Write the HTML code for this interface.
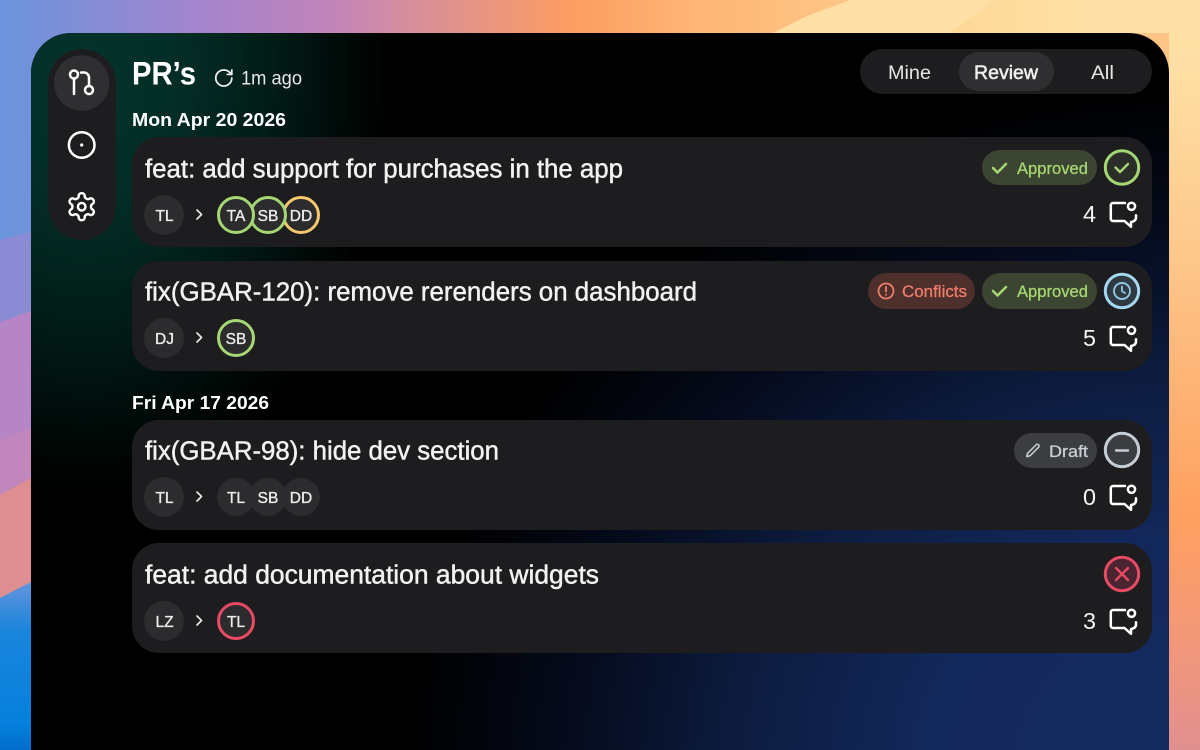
<!DOCTYPE html>
<html><head><meta charset="utf-8"><title>PR's</title>
<style>
html,body{margin:0;padding:0;background:#000;width:1200px;height:750px;overflow:hidden}
svg{display:block}
text{font-family:"Liberation Sans",sans-serif}
.t{font-size:25.5px;fill:#f2f2f2;stroke:#f2f2f2;stroke-width:.45}
.a{font-size:15.5px;fill:#ececec;text-anchor:middle;stroke:#ececec;stroke-width:.35}
.n{font-size:23px;fill:#f4f4f4}
.ic{fill:none;stroke:#fff;stroke-width:2.5;stroke-linecap:round;stroke-linejoin:round}
</style></head><body>
<svg width="1200" height="750" viewBox="0 0 1200 750" xmlns="http://www.w3.org/2000/svg">
<defs>
<linearGradient id="top" x1="0" y1="0" x2="1200" y2="0" gradientUnits="userSpaceOnUse">
<stop offset="0" stop-color="#6a95dc"/><stop offset=".026" stop-color="#7291da"/><stop offset=".17" stop-color="#a584cc"/><stop offset=".27" stop-color="#c084bb"/><stop offset=".36" stop-color="#dc9095"/><stop offset=".47" stop-color="#fb9c62"/><stop offset=".58" stop-color="#ffb575"/><stop offset=".7" stop-color="#fdc585"/><stop offset="1" stop-color="#fdc585"/>
</linearGradient>
<linearGradient id="streak" x1="950" y1="0" x2="1100" y2="0" gradientUnits="userSpaceOnUse">
<stop offset="0" stop-color="#fdd897"/><stop offset="1" stop-color="#fee0a6"/>
</linearGradient>
<linearGradient id="right" x1="0" y1="0" x2="0" y2="750" gradientUnits="userSpaceOnUse">
<stop offset="0" stop-color="#fee0a6"/><stop offset=".1" stop-color="#fedea3"/><stop offset=".33" stop-color="#fdc88c"/><stop offset=".69" stop-color="#ffa060"/><stop offset=".9" stop-color="#ee9580"/><stop offset="1" stop-color="#e09090"/>
</linearGradient>
<linearGradient id="leftb" x1="0" y1="580" x2="0" y2="750" gradientUnits="userSpaceOnUse">
<stop offset="0" stop-color="#6795dd"/><stop offset=".3" stop-color="#1a85dc"/><stop offset=".85" stop-color="#0580dc"/><stop offset="1" stop-color="#006ccc"/>
</linearGradient>
<linearGradient id="leftt" x1="0" y1="0" x2="31" y2="0" gradientUnits="userSpaceOnUse">
<stop offset="0" stop-color="#6a95dc"/><stop offset="1" stop-color="#7291da"/>
</linearGradient>
<radialGradient id="green" gradientUnits="userSpaceOnUse" cx="0" cy="0" r="1" gradientTransform="translate(85 70) scale(310 430)">
<stop offset="0" stop-color="#04342c"/><stop offset=".3" stop-color="#032d26"/><stop offset=".6" stop-color="#021c17"/><stop offset=".85" stop-color="#000907"/><stop offset="1" stop-color="#000"/>
</radialGradient>
<radialGradient id="blue" gradientUnits="userSpaceOnUse" cx="0" cy="0" r="1" gradientTransform="translate(1190 770) scale(780 680)">
<stop offset="0" stop-color="#152a60"/><stop offset=".35" stop-color="#13285a"/><stop offset=".6" stop-color="#0c1a3c"/><stop offset=".8" stop-color="#050b1c"/><stop offset="1" stop-color="#000"/>
</radialGradient>
<g id="cm" class="ic"><path d="M1125 203H1113a2.200 2.200 0 0 0-2.200 2.200V218.800a2.200 2.200 0 0 0 2.200 2.200H1124.500L1131 226.800V222C1134 221.500 1136 220 1136 217.500V215.200"/><circle cx="1131.500" cy="206.300" r="3.600"/></g>
<g id="ck"><path d="M0 0l4.500 4.500L13-4" fill="none" stroke="#a6d672" stroke-width="2.600" stroke-linecap="round" stroke-linejoin="round"/></g>
</defs>

<rect width="1200" height="750" fill="url(#top)"/>
<rect x="1169" y="0" width="31" height="750" fill="url(#right)"/>
<polygon points="850,0 1169,0 1169,33 773,33 807,16" fill="#fedfa5"/>
<polygon points="995,0 1100,0 1080,33 949,33" fill="url(#streak)"/>
<rect x="0" y="0" width="31" height="340" fill="url(#leftt)"/>
<polygon points="0,240 31,232 31,311 0,322" fill="#8b8ad4"/>
<polygon points="0,322 31,311 31,500 0,500" fill="#b585c6"/>
<polygon points="0,440 31,428 31,480 0,495" fill="#c186bb"/>
<polygon points="0,495 31,478 31,582 0,598" fill="#df8f92"/>
<polygon points="0,598 31,582 31,750 0,750" fill="url(#leftb)"/>

<path d="M31 750V73a40 40 0 0 1 40-40H1129a40 40 0 0 1 40 40V750Z" fill="#000"/>
<path d="M31 750V73a40 40 0 0 1 40-40H420V520H31Z" fill="url(#green)" />
<path d="M400 750V100H1169V750Z" fill="url(#blue)"/>

<rect x="48" y="49" width="68" height="191" rx="34" fill="#1d1d1f"/>
<circle cx="81.700" cy="83" r="27.700" fill="#2f2f31"/>
<g class="ic">
<circle cx="74" cy="74.500" r="4"/><path d="M74 78.500V94"/><path d="M81 72.500H84a5 5 0 0 1 5 5V86"/><circle cx="89" cy="90" r="4"/>
<circle cx="81.700" cy="145" r="12.800"/>
</g>
<circle cx="81.700" cy="145" r="1.600" fill="#fff"/>
<g transform="translate(65.500 190.500) scale(1.350)" class="ic" style="stroke-width:1.800">
<path d="M12.220 2h-.44a2 2 0 0 0-2 2v.18a2 2 0 0 1-1 1.730l-.43.25a2 2 0 0 1-2 0l-.15-.08a2 2 0 0 0-2.730.73l-.22.38a2 2 0 0 0 .73 2.730l.15.1a2 2 0 0 1 1 1.720v.51a2 2 0 0 1-1 1.740l-.15.09a2 2 0 0 0-.73 2.730l.22.38a2 2 0 0 0 2.730.73l.15-.08a2 2 0 0 1 2 0l.43.25a2 2 0 0 1 1 1.730V20a2 2 0 0 0 2 2h.44a2 2 0 0 0 2-2v-.18a2 2 0 0 1 1-1.730l.43-.25a2 2 0 0 1 2 0l.15.08a2 2 0 0 0 2.730-.73l.22-.39a2 2 0 0 0-.73-2.730l-.15-.08a2 2 0 0 1-1-1.740v-.5a2 2 0 0 1 1-1.740l.15-.09a2 2 0 0 0 .73-2.730l-.22-.38a2 2 0 0 0-2.730-.73l-.15.08a2 2 0 0 1-2 0l-.43-.25a2 2 0 0 1-1-1.730V4a2 2 0 0 0-2-2z"/><circle cx="12" cy="12" r="2.800"/>
</g>

<text x="132" y="84.500" font-size="32" font-weight="700" fill="#fff" textLength="64" lengthAdjust="spacingAndGlyphs">PR’s</text>
<g transform="translate(213.100 67.300) scale(.89)" fill="none" stroke="#eee" stroke-width="2" stroke-linecap="round" stroke-linejoin="round"><path d="M21 12a9 9 0 1 1-9-9c2.520 0 4.930 1 6.740 2.740L21 8"/><path d="M21 3v5h-5"/></g>
<text x="241" y="84.500" font-size="19.500" fill="#e8e8e8" textLength="61" lengthAdjust="spacingAndGlyphs">1m ago</text>

<rect x="860" y="49" width="292" height="45" rx="22.500" fill="#1d1d1f"/>
<rect x="959" y="52" width="95" height="39" rx="19.500" fill="#2f2f31"/>
<text x="888" y="79" font-size="19.500" fill="#e6e6e6" textLength="43" lengthAdjust="spacingAndGlyphs">Mine</text>
<text x="974" y="79" font-size="19.500" fill="#f2f2f2" stroke="#f2f2f2" stroke-width=".5" textLength="64" lengthAdjust="spacingAndGlyphs">Review</text>
<text x="1091" y="79" font-size="19.500" fill="#e6e6e6" textLength="23" lengthAdjust="spacingAndGlyphs">All</text>

<text x="132" y="126" font-size="18.500" font-weight="700" fill="#fff" textLength="154" lengthAdjust="spacingAndGlyphs">Mon Apr 20 2026</text>
<text x="132" y="409" font-size="18.500" font-weight="700" fill="#fff" textLength="137" lengthAdjust="spacingAndGlyphs">Fri Apr 17 2026</text>

<!-- Card 1 -->
<rect x="132" y="137" width="1020" height="110" rx="27" fill="#1d1d1f"/>
<text class="t" x="145" y="177.500" textLength="478" lengthAdjust="spacingAndGlyphs">feat: add support for purchases in the app</text>
<circle cx="164" cy="215" r="20" fill="#2c2c2e"/><text class="a" x="164.500" y="221">TL</text>
<path d="M197 210l4.500 4.500-4.500 4.500" fill="none" stroke="#e8e8e8" stroke-width="1.700" stroke-linecap="round" stroke-linejoin="round"/>
<circle cx="301" cy="215" r="17.500" fill="#2c2c2e" stroke="#f5c96c" stroke-width="3"/>
<circle cx="268" cy="215" r="17.500" fill="#2c2c2e" stroke="#a5d873" stroke-width="3"/>
<circle cx="236" cy="215" r="17.500" fill="#2c2c2e" stroke="#a5d873" stroke-width="3"/>
<text class="a" x="236" y="221">TA</text><text class="a" x="268" y="221">SB</text><text class="a" x="301" y="221">DD</text>
<rect x="982" y="150" width="115" height="35" rx="17.500" fill="#3b4532"/>
<use href="#ck" x="993" y="168"/>
<text x="1017" y="174" font-size="16.500" fill="#a6d672" stroke="#a6d672" stroke-width=".3" textLength="71" lengthAdjust="spacingAndGlyphs">Approved</text>
<circle cx="1122" cy="167.500" r="16.700" fill="#2b2e28" stroke="#a5d873" stroke-width="3"/>
<path d="M1115.500 167.500l4.500 4.500 8-8" fill="none" stroke="#a5d873" stroke-width="2.400" stroke-linecap="round" stroke-linejoin="round"/>
<text class="n" x="1083" y="222" textLength="13" lengthAdjust="spacingAndGlyphs">4</text>
<use href="#cm"/>

<!-- Card 2 -->
<rect x="132" y="261" width="1020" height="110" rx="27" fill="#1d1d1f"/>
<text class="t" x="145" y="300.500" textLength="552" lengthAdjust="spacingAndGlyphs">fix(GBAR-120): remove rerenders on dashboard</text>
<circle cx="164" cy="338" r="20" fill="#2c2c2e"/><text class="a" x="164.500" y="344">DJ</text>
<path d="M197 333l4.500 4.500-4.500 4.500" fill="none" stroke="#e8e8e8" stroke-width="1.700" stroke-linecap="round" stroke-linejoin="round"/>
<circle cx="236" cy="338" r="17.500" fill="#2c2c2e" stroke="#a5d873" stroke-width="3"/><text class="a" x="236" y="344">SB</text>
<rect x="868" y="273" width="107" height="36" rx="18" fill="#4d302c"/>
<circle cx="886" cy="291" r="7.500" fill="none" stroke="#ee7c6a" stroke-width="1.800"/>
<path d="M886 287v4.500M886 294.700v.1" fill="none" stroke="#ee7c6a" stroke-width="1.900" stroke-linecap="round"/>
<text x="902" y="297" font-size="16.500" fill="#ee7c6a" stroke="#ee7c6a" stroke-width=".3" textLength="65" lengthAdjust="spacingAndGlyphs">Conflicts</text>
<rect x="982" y="273" width="115" height="36" rx="18" fill="#3b4532"/>
<use href="#ck" x="993" y="291"/>
<text x="1017" y="297" font-size="16.500" fill="#a6d672" stroke="#a6d672" stroke-width=".3" textLength="71" lengthAdjust="spacingAndGlyphs">Approved</text>
<circle cx="1122" cy="291" r="16.700" fill="#2f3a42" stroke="#a3d8f0" stroke-width="3"/>
<circle cx="1122" cy="291" r="8" fill="none" stroke="#8fc8e4" stroke-width="1.900"/>
<path d="M1122 286.500v4.800l3 1.700" fill="none" stroke="#8fc8e4" stroke-width="1.800" stroke-linecap="round" stroke-linejoin="round"/>
<text class="n" x="1083" y="346" textLength="13" lengthAdjust="spacingAndGlyphs">5</text>
<use href="#cm" y="124"/>

<!-- Card 3 -->
<rect x="132" y="420" width="1020" height="110" rx="27" fill="#1d1d1f"/>
<text class="t" x="145" y="459.500" textLength="354" lengthAdjust="spacingAndGlyphs">fix(GBAR-98): hide dev section</text>
<circle cx="164" cy="497" r="20" fill="#2c2c2e"/><text class="a" x="164.500" y="503">TL</text>
<path d="M197 492l4.500 4.500-4.500 4.500" fill="none" stroke="#e8e8e8" stroke-width="1.700" stroke-linecap="round" stroke-linejoin="round"/>
<circle cx="301" cy="497" r="19" fill="#2c2c2e"/><circle cx="268" cy="497" r="19" fill="#2c2c2e"/><circle cx="236" cy="497" r="19" fill="#2c2c2e"/>
<text class="a" x="236" y="503">TL</text><text class="a" x="268" y="503">SB</text><text class="a" x="301" y="503">DD</text>
<rect x="1014" y="433" width="83" height="35" rx="17.500" fill="#3c3d40"/>
<g transform="translate(1025.500 443) scale(.62)" fill="none" stroke="#c8ced4" stroke-width="2.500" stroke-linecap="round" stroke-linejoin="round"><path d="M21.170 6.810a2.830 2.830 0 0 0-4-4L3.820 16.170a2 2 0 0 0-.5.83l-1.320 4.350a.5.5 0 0 0 .62.62l4.350-1.320a2 2 0 0 0 .83-.5z"/></g>
<text x="1049" y="457" font-size="16.500" fill="#c8ced4" stroke="#c8ced4" stroke-width=".3" textLength="39" lengthAdjust="spacingAndGlyphs">Draft</text>
<circle cx="1122" cy="450" r="16.700" fill="#3c3d40" stroke="#c5ced6" stroke-width="3"/>
<path d="M1116 450.500h12" stroke="#c5ced6" stroke-width="2.400" stroke-linecap="round"/>
<text class="n" x="1083" y="505" textLength="13" lengthAdjust="spacingAndGlyphs">0</text>
<use href="#cm" y="283"/>

<!-- Card 4 -->
<rect x="132" y="543" width="1020" height="110" rx="27" fill="#1d1d1f"/>
<text class="t" x="145" y="583.500" textLength="454" lengthAdjust="spacingAndGlyphs">feat: add documentation about widgets</text>
<circle cx="164" cy="621" r="20" fill="#2c2c2e"/><text class="a" x="164.500" y="627">LZ</text>
<path d="M197 616l4.500 4.500-4.500 4.500" fill="none" stroke="#e8e8e8" stroke-width="1.700" stroke-linecap="round" stroke-linejoin="round"/>
<circle cx="236" cy="621" r="17.500" fill="#2c2c2e" stroke="#e84a63" stroke-width="3"/><text class="a" x="236" y="627">TL</text>
<circle cx="1122" cy="574" r="16.700" fill="#4a2430" stroke="#e84a63" stroke-width="3"/>
<path d="M1116 568l12 12M1128 568l-12 12" stroke="#e84a63" stroke-width="2.400" stroke-linecap="round"/>
<text class="n" x="1083" y="629" textLength="13" lengthAdjust="spacingAndGlyphs">3</text>
<use href="#cm" y="407"/>
</svg>
</body></html>
